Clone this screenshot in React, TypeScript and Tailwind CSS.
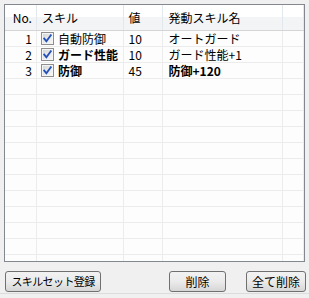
import React from "react";

const font = { fontFamily: '"Noto Sans CJK JP", "Noto Sans", sans-serif' };

function Check() {
  return (
    <svg width="13" height="13" viewBox="0 0 13 13" className="shrink-0">
      <defs>
        <linearGradient id="cbg" x1="0" y1="0" x2="1" y2="1">
          <stop offset="0" stopColor="#d8d8d8" />
          <stop offset="1" stopColor="#f6f6f6" />
        </linearGradient>
      </defs>
      <rect x="0.5" y="0.5" width="12" height="12" fill="#f4f4f4" stroke="#8f8f8f" />
      <rect x="2" y="2" width="9" height="9" fill="url(#cbg)" />
      <path d="M3.2 6.6 L5.4 9.2 L9.8 3.2" fill="none" stroke="#2350b8" strokeWidth="1.8" strokeLinecap="square" strokeLinejoin="miter" />
    </svg>
  );
}

const rows = [
  { no: "1", skill: "自動防御", val: "10", name: "オートガード", bold: false, nameBold: false },
  { no: "2", skill: "ガード性能", val: "10", name: "ガード性能+1", bold: true, nameBold: false },
  { no: "3", skill: "防御", val: "45", name: "防御+120", bold: true, nameBold: true },
];

function Btn({ children, w, extra }: { children: React.ReactNode; w: string; extra?: string }) {
  return (
    <div
      className={`${w} h-[21px] flex items-center justify-center whitespace-nowrap rounded-[3px] border border-[#707070] bg-gradient-to-b from-[#f2f2f2] via-[#ebebeb] to-[#d6d6d6] text-black leading-none ${extra ?? "text-[12px]"}`}
    >
      {children}
    </div>
  );
}

export default function App() {
  const empty = Array.from({ length: 12 });
  return (
    <div className="w-[309px] h-[298px] bg-[#f0f0f0] flex flex-col" style={font}>
      <div className="mx-[4px] mt-[4px] h-[258px] shrink-0 border border-[#828790] bg-white flex flex-col overflow-hidden">
        {/* header */}
        <div className="h-[26px] flex shrink-0 border-b border-[#d5d5d5] bg-gradient-to-b from-white from-50% to-[#f3f4f6] to-50% text-[12px] text-black">
          <div className="w-[32px] border-r border-[#e3e8ee] flex items-center justify-end pr-[4px]">No.</div>
          <div className="w-[87px] border-r border-[#e3e8ee] flex items-center pl-[5px]">スキル</div>
          <div className="w-[40px] border-r border-[#e3e8ee] flex items-center pl-[5px]">値</div>
          <div className="w-[120px] border-r border-[#e3e8ee] flex items-center pl-[5px]">発動スキル名</div>
          <div className="w-[21px] border-r border-[#e3e8ee]"></div>
        </div>
        {/* body */}
        <div className="flex flex-col text-[12px] text-black bg-[#fcfdfc]">
          {rows.map((r) => (
            <div key={r.no} className="h-[16px] flex shrink-0 border-b border-[#ececec] leading-[15px]">
              <div className="w-[32px] border-r border-[#ececec] text-right pr-[4px]">{r.no}</div>
              <div className={`w-[87px] border-r border-[#ececec] flex items-center gap-[4px] pl-[4px] ${r.bold ? "font-bold" : ""}`}>
                <Check />
                <span>{r.skill}</span>
              </div>
              <div className="w-[40px] border-r border-[#ececec] pl-[5px]">{r.val}</div>
              <div className={`w-[120px] border-r border-[#ececec] pl-[5px] ${r.nameBold ? "font-bold" : ""}`}>{r.name}</div>
              <div className="w-[21px] border-r border-[#ececec]"></div>
            </div>
          ))}
          {empty.map((_, i) => (
            <div key={i} className="h-[16px] flex shrink-0 border-b border-[#ececec]">
              <div className="w-[32px] border-r border-[#ececec]"></div>
              <div className="w-[87px] border-r border-[#ececec]"></div>
              <div className="w-[40px] border-r border-[#ececec]"></div>
              <div className="w-[120px] border-r border-[#ececec]"></div>
              <div className="w-[21px] border-r border-[#ececec]"></div>
            </div>
          ))}
        </div>
      </div>
      <div className="flex items-center mt-[9px] pl-[5px] pr-[3px] shrink-0">
        <Btn w="w-[96px]" extra="text-[11px] tracking-[-0.6px]">スキルセット登録</Btn>
        <div className="flex-1"></div>
        <Btn w="w-[57px]">削除</Btn>
        <div className="w-[20px]"></div>
        <Btn w="w-[60px]">全て削除</Btn>
      </div>
      <div className="mt-auto h-[5px] border-t border-[#dcdcdc]"></div>
    </div>
  );
}
